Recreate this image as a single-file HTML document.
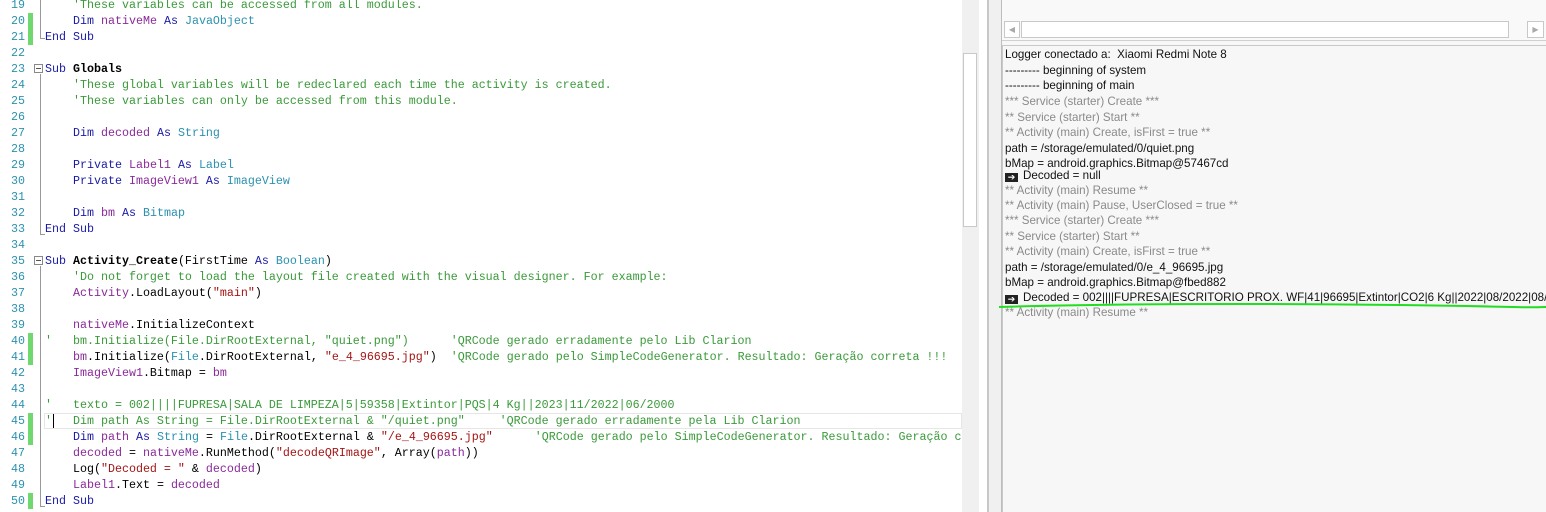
<!DOCTYPE html>
<html><head><meta charset="utf-8">
<style>
*{margin:0;padding:0;box-sizing:border-box}
body{width:1546px;height:512px;overflow:hidden;background:#fff;position:relative;font-family:"Liberation Sans",sans-serif}
#ed{position:absolute;left:0;top:0;width:962px;height:512px;background:#fff;overflow:hidden}
.ln{position:absolute;left:0;width:25px;text-align:right;font:11.67px/16px "Liberation Mono",monospace;color:#2b91af}
.cd{position:absolute;left:45px;white-space:pre;font:11.67px/16px "Liberation Mono",monospace;color:#000}
.mk{position:absolute;left:28px;width:5px;height:16px;background:#6fd86f}
.k{color:#1a1aa6}.v{color:#8a2a9a}.t{color:#2b91af}.c{color:#3a9a3a}.s{color:#a31515}.b{font-weight:bold}
.fold{position:absolute;left:40px;width:1px;background:#999}
.box{position:absolute;left:34px;width:9px;height:9px;border:1px solid #888;background:#fff}
.box:after{content:"";position:absolute;left:1px;top:3px;width:5px;height:1px;background:#555}
#vs{position:absolute;left:962px;top:0;width:17px;height:512px;background:#f0f0f0}
#th{position:absolute;left:963px;top:53px;width:14px;height:174px;background:#fff;border:1px solid #c8c8c8}
#rp{position:absolute;left:1001px;top:0;width:545px;height:512px;background:#f7f7f7;border-left:1px solid #bdbdbd}
.log{position:absolute;left:1005px;font-size:11.6px;line-height:15.5px;white-space:nowrap;color:#111;letter-spacing:0}
.g{color:#8a8a8a}
.arr{display:inline-block;width:13px;height:9px;background:#222;margin-right:5px;vertical-align:-1px;color:#fff;font-size:9px;line-height:9px;text-align:center}
</style></head><body>
<div id="ed">
<div class="fold" style="top:0;height:38px"></div>
<div style="position:absolute;left:40px;top:38px;width:5px;height:1px;background:#999"></div>
<div class="fold" style="top:74px;height:160px"></div>
<div style="position:absolute;left:40px;top:234px;width:5px;height:1px;background:#999"></div>
<div class="fold" style="top:266px;height:240px"></div>
<div style="position:absolute;left:40px;top:506px;width:5px;height:1px;background:#999"></div>
<div class="box" style="top:64px"></div>
<div class="box" style="top:256px"></div>
<div style="position:absolute;left:44px;top:413px;width:918px;height:16px;border:1px solid #e6e6e6"></div>
<div class="mk" style="top:13px"></div><div class="mk" style="top:29px"></div>
<div class="mk" style="top:333px"></div><div class="mk" style="top:349px"></div>
<div class="mk" style="top:413px"></div><div class="mk" style="top:429px"></div>
<div class="mk" style="top:493px"></div>
<div style="position:absolute;left:53px;top:414px;width:1px;height:14px;background:#000"></div>

<div class="ln" style="top:-3px">19</div><div class="cd" style="top:-3px">    <span class="c">'These variables can be accessed from all modules.</span></div>
<div class="ln" style="top:13px">20</div><div class="cd" style="top:13px">    <span class="k">Dim</span> <span class="v">nativeMe</span> <span class="k">As</span> <span class="t">JavaObject</span></div>
<div class="ln" style="top:29px">21</div><div class="cd" style="top:29px"><span class="k">End Sub</span></div>
<div class="ln" style="top:45px">22</div>
<div class="ln" style="top:61px">23</div><div class="cd" style="top:61px"><span class="k">Sub</span> <span class="b">Globals</span></div>
<div class="ln" style="top:77px">24</div><div class="cd" style="top:77px">    <span class="c">'These global variables will be redeclared each time the activity is created.</span></div>
<div class="ln" style="top:93px">25</div><div class="cd" style="top:93px">    <span class="c">'These variables can only be accessed from this module.</span></div>
<div class="ln" style="top:109px">26</div>
<div class="ln" style="top:125px">27</div><div class="cd" style="top:125px">    <span class="k">Dim</span> <span class="v">decoded</span> <span class="k">As</span> <span class="t">String</span></div>
<div class="ln" style="top:141px">28</div>
<div class="ln" style="top:157px">29</div><div class="cd" style="top:157px">    <span class="k">Private</span> <span class="v">Label1</span> <span class="k">As</span> <span class="t">Label</span></div>
<div class="ln" style="top:173px">30</div><div class="cd" style="top:173px">    <span class="k">Private</span> <span class="v">ImageView1</span> <span class="k">As</span> <span class="t">ImageView</span></div>
<div class="ln" style="top:189px">31</div>
<div class="ln" style="top:205px">32</div><div class="cd" style="top:205px">    <span class="k">Dim</span> <span class="v">bm</span> <span class="k">As</span> <span class="t">Bitmap</span></div>
<div class="ln" style="top:221px">33</div><div class="cd" style="top:221px"><span class="k">End Sub</span></div>
<div class="ln" style="top:237px">34</div>
<div class="ln" style="top:253px">35</div><div class="cd" style="top:253px"><span class="k">Sub</span> <span class="b">Activity_Create</span>(FirstTime <span class="k">As</span> <span class="t">Boolean</span>)</div>
<div class="ln" style="top:269px">36</div><div class="cd" style="top:269px">    <span class="c">'Do not forget to load the layout file created with the visual designer. For example:</span></div>
<div class="ln" style="top:285px">37</div><div class="cd" style="top:285px">    <span class="v">Activity</span>.LoadLayout(<span class="s">"main"</span>)</div>
<div class="ln" style="top:301px">38</div>
<div class="ln" style="top:317px">39</div><div class="cd" style="top:317px">    <span class="v">nativeMe</span>.InitializeContext</div>
<div class="ln" style="top:333px">40</div><div class="cd" style="top:333px"><span class="c">'   bm.Initialize(File.DirRootExternal, "quiet.png")      'QRCode gerado erradamente pelo Lib Clarion</span></div>
<div class="ln" style="top:349px">41</div><div class="cd" style="top:349px">    <span class="v">bm</span>.Initialize(<span class="t">File</span>.DirRootExternal, <span class="s">"e_4_96695.jpg"</span>)  <span class="c">'QRCode gerado pelo SimpleCodeGenerator. Resultado: Geração correta !!!</span></div>
<div class="ln" style="top:365px">42</div><div class="cd" style="top:365px">    <span class="v">ImageView1</span>.Bitmap = <span class="v">bm</span></div>
<div class="ln" style="top:381px">43</div>
<div class="ln" style="top:397px">44</div><div class="cd" style="top:397px"><span class="c">'   texto = 002||||FUPRESA|SALA DE LIMPEZA|5|59358|Extintor|PQS|4 Kg||2023|11/2022|06/2000</span></div>
<div class="ln" style="top:413px">45</div><div class="cd" style="top:413px"><span class="c">'   Dim path As String = File.DirRootExternal &amp; "/quiet.png"     'QRCode gerado erradamente pela Lib Clarion</span></div>
<div class="ln" style="top:429px">46</div><div class="cd" style="top:429px">    <span class="k">Dim</span> <span class="v">path</span> <span class="k">As</span> <span class="t">String</span> = <span class="t">File</span>.DirRootExternal &amp; <span class="s">"/e_4_96695.jpg"</span>      <span class="c">'QRCode gerado pelo SimpleCodeGenerator. Resultado: Geração correta !!!</span></div>
<div class="ln" style="top:445px">47</div><div class="cd" style="top:445px">    <span class="v">decoded</span> = <span class="v">nativeMe</span>.RunMethod(<span class="s">"decodeQRImage"</span>, Array(<span class="v">path</span>))</div>
<div class="ln" style="top:461px">48</div><div class="cd" style="top:461px">    Log(<span class="s">"Decoded = "</span> &amp; <span class="v">decoded</span>)</div>
<div class="ln" style="top:477px">49</div><div class="cd" style="top:477px">    <span class="v">Label1</span>.Text = <span class="v">decoded</span></div>
<div class="ln" style="top:493px">50</div><div class="cd" style="top:493px"><span class="k">End Sub</span></div>
</div>
<div id="vs"></div><div id="th"></div>
<div style="position:absolute;left:987px;top:0;width:2px;height:512px;background:#c8c8c8"></div>
<div style="position:absolute;left:989px;top:0;width:12px;height:512px;background:#f0f0f0"></div>
<div id="rp">
  <div style="position:absolute;left:0;top:0;width:545px;height:41px;background:#f9f9f9;border-bottom:1px solid #d0d0d0"></div>
  <div style="position:absolute;left:2px;top:21px;width:16px;height:17px;border:1px solid #c8c8c8;background:#fff;color:#aaa;font-size:8px;line-height:15px;text-align:center">◀</div>
  <div style="position:absolute;left:19px;top:21px;width:488px;height:17px;border:1px solid #c8c8c8;background:#fff"></div>
  <div style="position:absolute;left:525px;top:21px;width:17px;height:17px;border:1px solid #c8c8c8;background:#fff;color:#aaa;font-size:8px;line-height:15px;text-align:center">▶</div>
  <div style="position:absolute;left:0;top:45px;width:545px;height:467px;border-top:1px solid #c8c8c8;border-left:1px solid #c8c8c8;background:#f7f7f7"></div>
</div>
<div class="log" style="top:47px">Logger conectado a:&nbsp; Xiaomi Redmi Note 8</div>
<div class="log" style="top:63px">--------- beginning of system</div>
<div class="log" style="top:78px">--------- beginning of main</div>
<div class="log g" style="top:94px">*** Service (starter) Create ***</div>
<div class="log g" style="top:110px">** Service (starter) Start **</div>
<div class="log g" style="top:125px">** Activity (main) Create, isFirst = true **</div>
<div class="log" style="top:141px">path = /storage/emulated/0/quiet.png</div>
<div class="log" style="top:156px">bMap = android.graphics.Bitmap@57467cd</div>
<div class="log" style="top:168px"><span class="arr">➔</span>Decoded = null</div>
<div class="log g" style="top:183px">** Activity (main) Resume **</div>
<div class="log g" style="top:198px">** Activity (main) Pause, UserClosed = true **</div>
<div class="log g" style="top:213px">*** Service (starter) Create ***</div>
<div class="log g" style="top:229px">** Service (starter) Start **</div>
<div class="log g" style="top:244px">** Activity (main) Create, isFirst = true **</div>
<div class="log" style="top:260px">path = /storage/emulated/0/e_4_96695.jpg</div>
<div class="log" style="top:275px">bMap = android.graphics.Bitmap@fbed882</div>
<div class="log" style="top:290px;width:541px;overflow:hidden"><span class="arr">➔</span>Decoded = 002||||FUPRESA|ESCRITORIO PROX. WF|41|96695|Extintor|CO2|6 Kg||2022|08/2022|08/2000</div>
<div class="log g" style="top:305px">** Activity (main) Resume **</div>
<svg style="position:absolute;left:998px;top:300px" width="548" height="12"><path d="M1 7 C100 4,250 3,400 5 S520 8,548 7" stroke="#22dd22" stroke-width="2" fill="none"/></svg>
</body></html>
